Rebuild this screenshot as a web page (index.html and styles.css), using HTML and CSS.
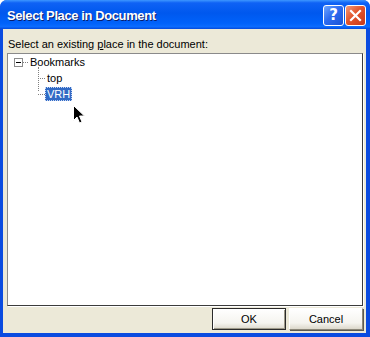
FILE: index.html
```html
<!DOCTYPE html>
<html lang="en">
<head>
  <meta charset="UTF-8" />
  <meta name="viewport" content="width=device-width, initial-scale=1.0" />
  <title>Select Place in Document</title>
  <link rel="stylesheet" href="styles.css">
</head>
<body>
  <!-- ============================
       Dialog Window
       ============================ -->
  <div class="window">
    <div class="titlebar">
      <span class="title">Select Place in Document</span>
      <div class="caption-buttons">
        <button class="cap-btn help" aria-label="Help">?</button>
        <button class="cap-btn close" aria-label="Close">
          <svg width="13" height="13" viewBox="0 0 13 13">
            <path d="M2 2 L11 11 M11 2 L2 11" stroke="#fff" stroke-width="2.2" stroke-linecap="square" fill="none" />
          </svg>
        </button>
      </div>
    </div>

    <div class="dialog-body">
      <label class="prompt">Select an existing <u>p</u>lace in the document:</label>

      <!-- Tree of places -->
      <div class="listbox">
        <ul class="tree">
          <li class="node root">
            <div class="row">
              <span class="expander"></span>
              <span class="link-h"></span>
              <span class="label">Bookmarks</span>
            </div>
            <ul class="children">
              <li class="row child">
                <span class="branch"></span>
                <span class="label">top</span>
              </li>
              <li class="row child last">
                <span class="branch"></span>
                <span class="label selected">VRH</span>
              </li>
            </ul>
          </li>
        </ul>

        <!-- Mouse pointer -->
        <svg class="pointer" width="12" height="19" viewBox="0 0 12 19">
          <path d="M0.5 0.5 L0.5 15.5 L4 12 L6.5 18 L9 17 L6.5 11 L11.5 11 Z" fill="#000" stroke="#fff" stroke-width="1" />
        </svg>
      </div>

      <div class="button-row">
        <button class="btn default">OK</button>
        <button class="btn">Cancel</button>
      </div>
    </div>
  </div>
</body>
</html>
```

FILE: styles.css
```css
/* ============================
   Basic Reset
   ============================ */
* {
  margin: 0;
  padding: 0;
  box-sizing: border-box;
}

body {
  width: 370px;
  height: 337px;
  background: #ffffff;
  font-family: "Liberation Sans", Arial, sans-serif;
  font-size: 11px;
  color: #000;
  overflow: hidden;
}

/* ============================
   Window Frame
   ============================ */
.window {
  width: 370px;
  height: 337px;
  display: flex;
  flex-direction: column;
  background: #0a4be0;
  border-radius: 7px 7px 0 0;
  overflow: hidden;
}

.titlebar {
  height: 29px;
  display: flex;
  align-items: center;
  justify-content: space-between;
  padding: 0 4px 0 7px;
  background: linear-gradient(to bottom,
    #3d97ff 0%, #0f62f5 10%, #0058ee 45%, #0062fa 80%, #0b6cff 92%, #0449da 100%);
}

.title {
  color: #fff;
  font-weight: bold;
  font-size: 13px;
  letter-spacing: -0.4px;
  text-shadow: 1px 1px 0 #0a1e6b;
  margin-top: 1px;
}

.caption-buttons {
  display: flex;
  gap: 1px;
  margin-top: 2px;
}

.cap-btn {
  width: 21px;
  height: 21px;
  border: 1px solid #fff;
  border-radius: 3px;
  display: flex;
  align-items: center;
  justify-content: center;
  color: #fff;
  cursor: pointer;
}

.help {
  background: linear-gradient(135deg, #6ea6ff 0%, #2d6cf0 45%, #1a53d6 100%);
  font-family: "DejaVu Sans", sans-serif;
  font-weight: bold;
  font-size: 15px;
  line-height: 1;
}

.close {
  background: linear-gradient(135deg, #f39a78 0%, #e2552c 45%, #c6391a 100%);
}

/* ============================
   Dialog Body
   ============================ */
.dialog-body {
  flex: 1;
  display: flex;
  flex-direction: column;
  background: #ece9d8;
  margin: 0 4px 4px 3px;
  padding: 9px 3px 3px 4px;
}

.prompt {
  display: block;
  height: 13px;
  line-height: 13px;
  padding-left: 1px;
}

.prompt u {
  text-decoration: underline;
}

.listbox {
  position: relative;
  margin-top: 2px;
  height: 253px;
  background: #fff;
  border: 1px solid;
  border-color: #8a8a8a #3c3c3c #3c3c3c #8a8a8a;
  box-shadow: 1px 1px 0 #fff;
}

/* ============================
   Tree View
   ============================ */
.tree,
.children {
  list-style: none;
}

.row {
  height: 16px;
  display: flex;
  align-items: center;
  position: relative;
}

.root > .row {
  padding-left: 6px;
}

.expander {
  width: 9px;
  height: 9px;
  border: 1px solid #8c8c8c;
  background: #fff;
  position: relative;
}

.expander::after {
  content: "";
  position: absolute;
  left: 1px;
  top: 3px;
  width: 5px;
  height: 1px;
  background: #000;
}

.link-h {
  width: 5px;
  border-top: 1px dotted #808080;
}

.label {
  padding: 0 2px;
  line-height: 14px;
  height: 14px;
}

.children {
  position: relative;
  margin-left: 30px;
}

.children::before {
  content: "";
  position: absolute;
  left: 0;
  top: -3px;
  height: 24px;
  border-left: 1px dotted #808080;
}

.child .branch {
  width: 7px;
  border-top: 1px dotted #808080;
}

.selected {
  background: #316ac5;
  color: #fff;
  outline: 1px dotted #c8d8f4;
  outline-offset: -1px;
}

.pointer {
  position: absolute;
  left: 65px;
  top: 51px;
}

/* ============================
   Buttons
   ============================ */
.button-row {
  display: flex;
  justify-content: flex-end;
  gap: 3px;
  margin-top: 2px;
}

.btn {
  width: 74px;
  height: 22px;
  font-family: "Liberation Sans", Arial, sans-serif;
  font-size: 11px;
  color: #000;
  background: linear-gradient(to bottom, #ffffff 0%, #f5f4ef 70%, #dcd8cb 100%);
  border: 1px solid;
  border-color: #fff #8a8678 #8a8678 #fff;
  box-shadow: 1px 1px 0 #5c5a50;
  cursor: pointer;
}

.btn.default {
  border: 1px solid #2b2b2b;
  box-shadow: inset 1px 1px 0 #fff, inset -1px -1px 0 #9c9888;
}
```
